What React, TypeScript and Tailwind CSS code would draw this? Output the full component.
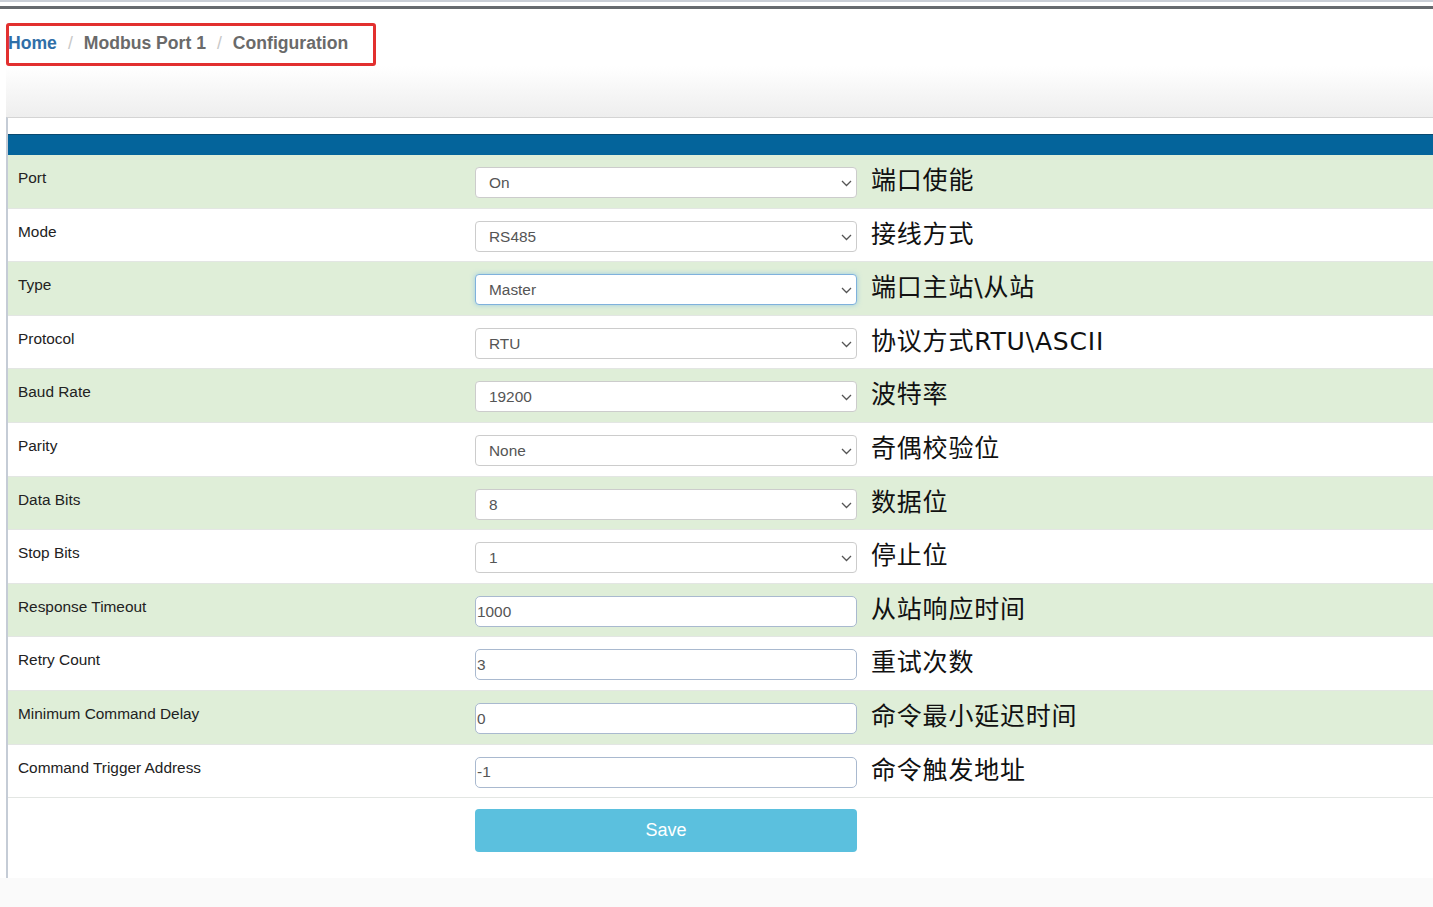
import React from "react";

type Row = { label: string; kind: "select" | "input"; value: string; note: string; focus?: boolean };

const rows: Row[] = [
  { label: "Port", kind: "select", value: "On", note: "端口使能" },
  { label: "Mode", kind: "select", value: "RS485", note: "接线方式" },
  { label: "Type", kind: "select", value: "Master", note: "端口主站\\从站", focus: true },
  { label: "Protocol", kind: "select", value: "RTU", note: "协议方式RTU\\ASCII" },
  { label: "Baud Rate", kind: "select", value: "19200", note: "波特率" },
  { label: "Parity", kind: "select", value: "None", note: "奇偶校验位" },
  { label: "Data Bits", kind: "select", value: "8", note: "数据位" },
  { label: "Stop Bits", kind: "select", value: "1", note: "停止位" },
  { label: "Response Timeout", kind: "input", value: "1000", note: "从站响应时间" },
  { label: "Retry Count", kind: "input", value: "3", note: "重试次数" },
  { label: "Minimum Command Delay", kind: "input", value: "0", note: "命令最小延迟时间" },
  { label: "Command Trigger Address", kind: "input", value: "-1", note: "命令触发地址" },
];

function Chevron() {
  return (
    <svg width="11" height="7" viewBox="0 0 11 7" className="absolute right-[4px] top-[12px]">
      <polyline points="1,1 5.5,5.5 10,1" fill="none" stroke="#555" strokeWidth="1.3" />
    </svg>
  );
}

export default function App() {
  return (
    <div className="min-h-screen bg-[#fafafa]" style={{ fontFamily: '"Liberation Sans", Arial, sans-serif' }}>
      <div className="bg-white">
        <div className="h-[2px] bg-[#c9ced6]" />
        <div className="h-[4px] bg-white" />
        <div className="h-[3px] bg-[#666a6e]" />
        <div className="h-[14px]" />
        <div className="ml-[6px] w-[370px] h-[43px] border-[3px] border-[#e2302f] rounded-[3px] flex items-center pb-[3px] text-[17.6px] font-bold">
          <span className="text-[#2f6fa8] -ml-[1px]">Home</span>
          <span className="text-[#c8c8c8] font-normal mx-[11px]">/</span>
          <span className="text-[#6a6a6a]">Modbus Port 1</span>
          <span className="text-[#c8c8c8] font-normal mx-[11px]">/</span>
          <span className="text-[#6a6a6a]">Configuration</span>
        </div>
        <div className="ml-[6px] h-[51px] bg-gradient-to-b from-white to-[#eeeeee]" />
        <div className="ml-[6px] border-l-2 border-t border-l-[#c5ccd6] border-t-[#d4d4d4] bg-white">
          <div className="h-[16px]" />
          <div className="h-[21px] bg-[#04649b] border-t border-[#0a4a70]" />
          {rows.map((r, i) => (
            <div
              key={r.label}
              className={`flex h-[53.6px] border-b border-[#e3e6e3] ${i % 2 === 0 ? "bg-[#dfeed8]" : "bg-white"}`}
            >
              <div className="w-[467px] pl-[10px] pt-[11px] text-[15.4px] text-[#222]">{r.label}</div>
              <div className="pt-[12px]">
                {r.kind === "select" ? (
                  <div
                    className={`relative w-[382px] h-[31px] rounded-[4px] bg-white border flex items-center pl-[13px] text-[15.4px] text-[#555] ${
                      r.focus ? "border-[#7fb1dc] shadow-[0_0_5px_rgba(102,175,233,0.55)]" : "border-[#cccccc]"
                    }`}
                  >
                    {r.value}
                    <Chevron />
                  </div>
                ) : (
                  <div className="w-[382px] h-[31px] rounded-[5px] bg-white border border-[#a9b9cf] flex items-center pl-[1px] text-[15.4px] text-[#555]">
                    {r.value}
                  </div>
                )}
              </div>
              <div
                className="ml-[14px] pt-[9px] text-[25px] text-[#111] leading-[34px] tracking-[0.8px]"
                style={{ fontFamily: '"DejaVu Sans", "Noto Sans CJK SC", sans-serif' }}
              >
                {r.note}
              </div>
            </div>
          ))}
          <div className="h-[80px] pt-[11px] pl-[467px]">
            <div className="w-[382px] h-[43px] rounded-[4px] bg-[#5bc0de] flex items-center justify-center text-white text-[18px]">
              Save
            </div>
          </div>
        </div>
      </div>
    </div>
  );
}
